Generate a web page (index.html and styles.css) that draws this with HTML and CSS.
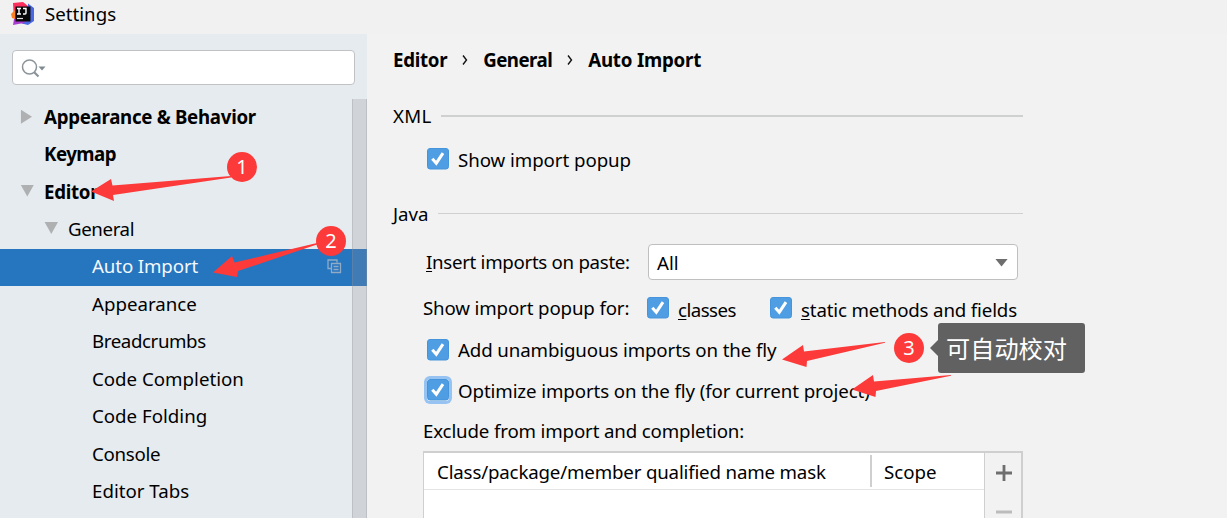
FILE: index.html
```html
<!DOCTYPE html>
<html lang="en">
<head>
<meta charset="utf-8">
<title>Settings</title>
<link rel="stylesheet" href="styles.css">
</head>
<body>
<svg width="0" height="0" class="defs">
  <symbol id="check" viewBox="0 0 22 22"><rect x=".5" y=".5" width="21" height="20.5" rx="2.5" fill="#4f9de2" stroke="#4695dc"/><path d="M5.300 10.800l4 4.400 6.700-10" fill="none" stroke="#fff" stroke-width="3"/></symbol>
</svg>
<header class="titlebar">
  <svg class="logo" width="24" height="24" viewBox="0 0 24 24">
    <path d="M2 1l10-1 5 4-5 12-9 1z" fill="#fc2f5c"/>
    <path d="M0 12l4-4v9l-3-1z" fill="#fd8224"/>
    <path d="M3 17l8-1 7 3-3 3-5-.5-8 1.500z" fill="#a83ccf"/>
    <path d="M17 1.500l6 4.500v13l-6 4-6-1.500 6-3z" fill="#4a68e4"/>
    <rect x="4.500" y="4.500" width="15" height="15" fill="#080808"/>
    <path d="M6 6.500h4M8 6.500v5.500M6 12h4M12 6.500h3v4.500q0 1-1 1H12" stroke="#fff" stroke-width="1.400" fill="none"/>
    <path d="M6 16.500h6" stroke="#ddd" stroke-width="1.200"/>
  </svg>
  <span class="t-settings">Settings</span>
</header>
<div class="body">
  <aside class="sidebar">
    <div class="search">
      <svg width="26" height="20" viewBox="0 0 26 20"><circle cx="8.500" cy="8" r="7" fill="none" stroke="#8b949a" stroke-width="1.500"/><path d="M13 13l4.500 4.500" stroke="#8b949a" stroke-width="2.200"/><path d="M17.500 7.500h7l-3.500 4z" fill="#7f8b91"/></svg>
    </div>
    <div class="treewrap">
      <ul class="tree">
        <li class="l1"><i class="tri right"></i><b>Appearance &amp; Behavior</b></li>
        <li class="l1"><i class="tri"></i><b class="w-km">Keymap</b></li>
        <li class="l1"><i class="tri down"></i><b>Editor</b></li>
        <li class="l2"><i class="tri down"></i><span class="w-ge">General</span></li>
        <li class="l3 selected"><span class="w-ai">Auto Import</span>
          <svg class="copy" width="15" height="15" viewBox="0 0 15 15" fill="none" stroke="#8fabc6" stroke-width="1.300"><path d="M4 9.500H1V1h9v2.500M4.500 4.500h9v9h-9zM6.500 7.500h5M6.500 10.500h5"/></svg></li>
        <li class="l3"><span>Appearance</span></li>
        <li class="l3"><span class="w-br">Breadcrumbs</span></li>
        <li class="l3"><span>Code Completion</span></li>
        <li class="l3"><span>Code Folding</span></li>
        <li class="l3"><span class="w-co">Console</span></li>
        <li class="l3"><span>Editor Tabs</span></li>
      </ul>
      <div class="scroll"></div>
    </div>
  </aside>
  <main class="main">
    <nav class="crumbs">
      <b>Editor</b>
      <svg width="6" height="12" viewBox="0 0 6 12"><path d="M1 1.500l3.500 4.500L1 10.500" fill="none" stroke="#111" stroke-width="1.400"/></svg>
      <b class="w-c2">General</b>
      <svg width="6" height="12" viewBox="0 0 6 12"><path d="M1 1.500l3.500 4.500L1 10.500" fill="none" stroke="#111" stroke-width="1.400"/></svg>
      <b class="w-c3">Auto Import</b>
    </nav>
    <div class="group xml"><span class="w-x">XML</span><hr class="thick"></div>
    <label class="opt first"><svg class="cb"><use href="#check"/></svg><span class="w-sp">Show import popup</span></label>
    <div class="group java"><span>Java</span><hr></div>
    <div class="row insert"><span class="w-in"><u>I</u>nsert imports on paste:</span>
      <div class="combo"><span>All</span><i class="caret"></i></div></div>
    <div class="row popup"><span class="w-sf">Show import popup for:</span>
      <label class="inline"><svg class="cb"><use href="#check"/></svg><span class="w-cl"><u>c</u>lasses</span></label>
      <label class="inline second"><svg class="cb"><use href="#check"/></svg><span class="w-st"><u>s</u>tatic methods and fields</span></label></div>
    <label class="opt add"><svg class="cb"><use href="#check"/></svg><span class="w-ad">Add unambiguous imports on the fly</span></label>
    <label class="opt optimize"><svg class="cb focus"><use href="#check"/></svg><span class="w-op">Optimize imports on the fly (for current project)</span></label>
    <div class="row exclude"><span class="w-ex">Exclude from import and completion:</span></div>
    <div class="table">
      <div class="grid">
        <div class="thead"><span class="th1">Class/package/member qualified name mask</span><span class="th2">Scope</span></div>
      </div>
      <div class="tools">
        <svg width="16" height="16" viewBox="0 0 16 16"><path d="M0 8h16M8 0v16" stroke="#6e6e6e" stroke-width="2.800"/></svg>
        <svg width="16" height="16" viewBox="0 0 16 16"><path d="M0 8h16" stroke="#bcbcbc" stroke-width="3"/></svg>
      </div>
    </div>
  </main>
</div>
<svg class="arrows" width="1227" height="518" viewBox="0 0 1227 518" fill="#fc3a3a">
  <path d="M91 191.500L111 179l1.500 6.500L231 176v1.500L113 195l1 6z"/>
  <path d="M213 272.500L232 256l2.500 6.500L317 243v1.500L238 271l-1 6z"/>
  <path d="M782 359.500L803 345l1 6.500L885 342v.8L807 361l-.5 6z"/>
  <path d="M852 389.500L873 375l1 6.500L951 375v.8L876 391l-.5 6z"/>
</svg>
<span class="pin p1">1</span>
<span class="pin p2">2</span>
<span class="pin p3">3</span>
<div class="tip">可自动校对</div>
</body>
</html>
```
FILE: styles.css
```css
* { box-sizing: border-box; }
body { margin: 0; width: 1227px; height: 518px; overflow: hidden; position: relative; background: #f2f2f2; color: #000; font: 18.7px/24px "Noto Sans", "Noto Sans CJK SC", sans-serif; white-space: nowrap; }
b { letter-spacing: -.29px; }
.defs { position: absolute; }
.titlebar { height: 34px; padding: 2px 0 0 11px; display: flex; gap: 10px; background: #f1f1f1; }
.body { display: flex; height: 484px; }
.sidebar { width: 367px; background: #e6ebef; display: flex; flex-direction: column; }
.search { margin: 16px 12px 14px; height: 35px; flex: none; border: 1px solid #c0c2c4; border-radius: 4px; background: #fff; padding: 8px 0 0 8px; }
.treewrap { flex: 1; min-height: 0; overflow: hidden; display: grid; }
.tree, .scroll { grid-area: 1 / 1; }
.tree { list-style: none; margin: 0; padding: 0; }
.tree li { height: 37.46px; display: flex; align-items: center; padding-bottom: 2.200px; }
.l1 { padding-left: 20px; }
.l2 { padding-left: 44px; }
.l3 { padding-left: 92px; }
.tree .selected { background: #2675bf; color: #f4f8fb; justify-content: space-between; padding-right: 25px; }
.w-km { letter-spacing: -.5px; }
.w-ge, .w-br { letter-spacing: -.4px; }
.w-ai { letter-spacing: -.12px; }
.w-co { letter-spacing: -.28px; }
.tri { width: 24px; height: 14px; flex: none; }
.tri::before { content: ""; display: block; }
.right::before { width: 12px; height: 14px; background: #aeb0b2; clip-path: polygon(8% 0, 100% 50%, 8% 100%); }
.down::before { width: 14px; height: 12px; background: #aeb0b2; clip-path: polygon(4% 0, 100% 0, 52% 100%); }
.scroll { justify-self: end; width: 15px; background: rgba(145,145,150,.25); border: solid rgba(145,145,150,.3); border-width: 0 1px; z-index: 1; }
.main { flex: 1; padding-left: 26px; display: flex; flex-direction: column; }
.main > * { flex: none; display: flex; align-items: center; }
.crumbs { height: 32px; margin-top: 10px; gap: 15px; }
.w-c2 { letter-spacing: -.55px; }
.w-c3 { letter-spacing: -.2px; }
.group { width: 630px; height: 30px; gap: 9px; }
.group hr { flex: 1; margin: 0; border: 0; height: 1px; background: #cfd1d1; position: relative; top: -1px; }
.group .thick { height: 2px; top: 0; }
.w-x { letter-spacing: .3px; }
.xml { margin-top: 25px; }
.java { margin-top: 24px; }
.opt { height: 30px; padding-left: 34px; gap: 9px; }
.cb { width: 22px; height: 22px; flex: none; position: relative; top: -1px; }
.w-sp { letter-spacing: -.06px; }
.first { margin-top: 14px; }
.insert { height: 36px; margin-top: 15px; padding-left: 33px; }
.w-in { width: 222px; letter-spacing: -.3px; }
.combo { width: 370px; height: 36px; border: 1px solid #bfbfbf; border-radius: 4px; background: #fff; padding: 1px 9px 0 8px; display: flex; justify-content: space-between; align-items: center; }
.caret { width: 13px; height: 8px; background: #6e6e6e; clip-path: polygon(0 0, 100% 0, 50% 100%); }
.popup { height: 32px; margin-top: 12px; padding-left: 30px; }
.w-sf { width: 224px; letter-spacing: -.14px; }
.inline { display: flex; align-items: center; gap: 9px; width: 123px; }
.inline .cb { top: 0; }
.inline span { position: relative; top: 2px; }
.w-cl { letter-spacing: -.55px; }
.w-st { letter-spacing: -.16px; }
u { text-decoration-thickness: 1px; text-underline-offset: 2px; }
.add { margin-top: 11px; }
.add .cb { top: 0; }
.w-ad { letter-spacing: -.12px; }
.optimize { margin-top: 11px; }
.w-op { letter-spacing: -.1px; }
.focus { box-shadow: 0 0 0 3px #97c3f3; border-radius: 3px; }
.exclude { height: 30px; margin-top: 10px; padding-left: 30px; letter-spacing: -.15px; }
.table.table { margin: 5px 0 0 30px; width: 600px; height: 80px; border: 2px solid #cfcfcf; border-left-width: 1px; align-items: stretch; }
.grid { width: 560px; background: #fff; }
.thead { height: 37px; border-bottom: 1px solid #e3e3e3; display: flex; align-items: center; }
.th1 { width: 448px; padding-left: 13px; height: 32px; line-height: 33px; border-right: 2px solid #cfcfcf; letter-spacing: -.17px; }
.th2 { padding: 1px 0 0 12px; }
.tools { flex: 1; border-left: 1px solid #cfcfcf; padding: 12px 0 0 2px; display: flex; flex-direction: column; align-items: center; gap: 23px; }
.arrows { position: absolute; left: 0; top: 0; z-index: 2; }
.pin { position: absolute; z-index: 3; width: 30px; height: 30px; border-radius: 50%; background: #fc3a3a; color: #fff; text-align: center; line-height: 29px; font-size: 20px; }
.p1 { left: 227px; top: 152px; }
.p2 { left: 316px; top: 226px; }
.p3 { left: 894px; top: 333px; }
.tip { position: absolute; z-index: 3; left: 938px; top: 323px; width: 147px; height: 50px; border-radius: 3px; background: #616161; color: #fff; font: 24.200px/50px "Noto Sans CJK SC", sans-serif; padding-left: 8px; }
.tip::before { content: ""; position: absolute; left: -8px; top: 17px; border: solid transparent; border-width: 8px 8px 8px 0; border-right-color: #616161; }
```
